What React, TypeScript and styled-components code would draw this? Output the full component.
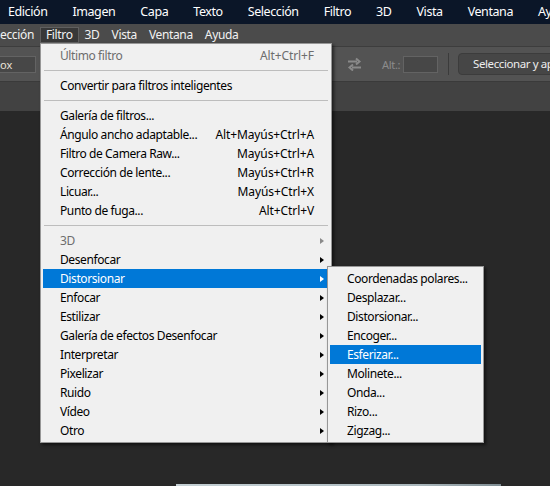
import styled, { createGlobalStyle } from "styled-components";

const GlobalStyle = createGlobalStyle`
	html, body {
		margin: 0;
		padding: 0;
		background: #282828;
	}
	body {
		font-family: "Noto Sans", "Open Sans", sans-serif;
	}
`;

const Page = styled.div`
	position: relative;
	width: 550px;
	height: 486px;
	overflow: hidden;
	display: flex;
	flex-direction: column;
	background: #282828;
`;

// ---- window menu bar (navy) ----
const AppBar = styled.div`
	height: 24px;
	flex: none;
	display: flex;
	align-items: center;
	gap: 25px;
	padding-left: 8px;
	background: #0b1628;
	white-space: nowrap;
`;

const AppBarItem = styled.span`
	flex: none;
	color: #ffffff;
	font-size: 12.5px;
	line-height: 24px;
	letter-spacing: -0.42px;
`;

// ---- photoshop menu bar ----
const MenuBar = styled.div`
	height: 22px;
	flex: none;
	display: flex;
	align-items: center;
	background: #4b4b4b;
	border-bottom: 1px solid #3d3d3d;
	white-space: nowrap;
`;

const MenuBarItem = styled.span<{ $open?: boolean }>`
	flex: none;
	height: 16px;
	box-sizing: border-box;
	padding: 0 5px;
	color: #f2f2f2;
	font-size: 12px;
	line-height: 14px;
	letter-spacing: -0.35px;
	border: 1px solid ${(p) => (p.$open ? "#5f5f5f" : "transparent")};
	background: ${(p) => (p.$open ? "#383838" : "transparent")};
	&:first-child {
		padding-left: 0;
		border-left: none;
	}
`;

// ---- options bar ----
const OptionsBar = styled.div`
	height: 34px;
	flex: none;
	display: flex;
	align-items: center;
	background: #535353;
	white-space: nowrap;
`;

const Field = styled.div<{ $w: number }>`
	flex: none;
	width: ${(p) => p.$w}px;
	height: 17px;
	box-sizing: border-box;
	background: #474747;
	border: 1px solid #636363;
	color: #e9e2d6;
	font-size: 11px;
	line-height: 15px;
	padding-left: 4px;
`;

const PresetField = styled(Field)`
	border-left: none;
	padding-left: 0;
`;

const SwapIcon = styled.svg`
	margin-left: 311px;
	flex: none;
`;

const FieldLabel = styled.span`
	flex: none;
	width: 21px;
	margin-left: 20px;
	color: #8c8c8c;
	font-size: 11px;
	letter-spacing: -0.3px;
`;

const Divider = styled.div`
	flex: none;
	width: 1px;
	height: 22px;
	margin: 0 9px 0 10px;
	background: #3b3b3b;
`;

const MaskButton = styled.div`
	flex: none;
	height: 22px;
	box-sizing: border-box;
	padding: 0 14px;
	border: 1px solid #3c3c3c;
	border-radius: 4px;
	background: #464646;
	color: #ededed;
	font-size: 11.5px;
	line-height: 20px;
	letter-spacing: -0.4px;
`;

const TabStrip = styled.div`
	height: 29px;
	flex: none;
	background: #424242;
	border-top: 1px solid #3a3a3a;
`;

const Canvas = styled.div`
	flex: 1;
	padding: 373px 0 0 176px;
	background: #282828;
`;

const DocImage = styled.div`
	width: 325px;
	height: 20px;
	background: linear-gradient(90deg, #c5d0d4 0%, #b8c5ca 40%, #aab7bc 75%, #7f8d93 100%);
`;

// ---- dropdown menus ----
const Menu = styled.div<{ $left: number; $top: number; $width: number }>`
	position: absolute;
	left: ${(p) => p.$left}px;
	top: ${(p) => p.$top}px;
	width: ${(p) => p.$width}px;
	box-sizing: border-box;
	padding: 2px;
	background: #f0f0f0;
	border: 1px solid #979797;
	box-shadow: 2px 2px 3px rgba(0, 0, 0, 0.55);
	font-size: 12px;
	letter-spacing: -0.4px;
	white-space: nowrap;
`;

const Row = styled.div<{ $active?: boolean; $disabled?: boolean }>`
	height: 19px;
	box-sizing: border-box;
	display: flex;
	padding: 1px 0 0 17px;
	background: ${(p) => (p.$active ? "#0078d7" : "transparent")};
	color: ${(p) => (p.$active ? "#ffffff" : p.$disabled ? "#6d6d6d" : "#000000")};
`;

const Label = styled.span`
	flex: 1;
	line-height: 18px;
`;

const Shortcut = styled.span`
	line-height: 18px;
	letter-spacing: -0.1px;
`;

const ArrowSlot = styled.span`
	width: 15px;
	flex: none;
	display: flex;
	align-items: center;
	padding: 0 0 1px 6px;
	box-sizing: border-box;
`;

const Arrow = styled.span<{ $color: string }>`
	width: 0;
	height: 0;
	border-top: 3.5px solid transparent;
	border-bottom: 3.5px solid transparent;
	border-left: 4px solid ${(p) => p.$color};
`;

const Separator = styled.div`
	height: 1px;
	margin: 5px 1px;
	background: #bdbdbd;
`;

type Item =
	| { sep: true }
	| {
			sep?: false;
			label: string;
			shortcut?: string;
			sub?: boolean;
			disabled?: boolean;
			active?: boolean;
	  };

const filterItems: Item[] = [
	{ label: "Último filtro", shortcut: "Alt+Ctrl+F", disabled: true },
	{ sep: true },
	{ label: "Convertir para filtros inteligentes" },
	{ sep: true },
	{ label: "Galería de filtros..." },
	{ label: "Ángulo ancho adaptable...", shortcut: "Alt+Mayús+Ctrl+A" },
	{ label: "Filtro de Camera Raw...", shortcut: "Mayús+Ctrl+A" },
	{ label: "Corrección de lente...", shortcut: "Mayús+Ctrl+R" },
	{ label: "Licuar...", shortcut: "Mayús+Ctrl+X" },
	{ label: "Punto de fuga...", shortcut: "Alt+Ctrl+V" },
	{ sep: true },
	{ label: "3D", sub: true, disabled: true },
	{ label: "Desenfocar", sub: true },
	{ label: "Distorsionar", sub: true, active: true },
	{ label: "Enfocar", sub: true },
	{ label: "Estilizar", sub: true },
	{ label: "Galería de efectos Desenfocar", sub: true },
	{ label: "Interpretar", sub: true },
	{ label: "Pixelizar", sub: true },
	{ label: "Ruido", sub: true },
	{ label: "Vídeo", sub: true },
	{ label: "Otro", sub: true },
];

const distortItems: Item[] = [
	{ label: "Coordenadas polares..." },
	{ label: "Desplazar..." },
	{ label: "Distorsionar..." },
	{ label: "Encoger..." },
	{ label: "Esferizar...", active: true },
	{ label: "Molinete..." },
	{ label: "Onda..." },
	{ label: "Rizo..." },
	{ label: "Zigzag..." },
];

function MenuList({ items, arrows }: { items: Item[]; arrows: boolean }) {
	return (
		<>
			{items.map((it, i) => {
				if (it.sep) return <Separator key={i} />;
				const arrowColor = it.active ? "#ffffff" : it.disabled ? "#8a8a8a" : "#000000";
				return (
					<Row key={i} $active={it.active} $disabled={it.disabled}>
						<Label>{it.label}</Label>
						{it.shortcut && <Shortcut>{it.shortcut}</Shortcut>}
						{arrows && <ArrowSlot>{it.sub && <Arrow $color={arrowColor} />}</ArrowSlot>}
					</Row>
				);
			})}
		</>
	);
}

export default function App() {
	return (
		<>
			<GlobalStyle />
			<Page>
				<AppBar>
					{["Edición", "Imagen", "Capa", "Texto", "Selección", "Filtro", "3D", "Vista", "Ventana", "Ayuda"].map(
						(t) => (
							<AppBarItem key={t}>{t}</AppBarItem>
						)
					)}
				</AppBar>
				<MenuBar>
					<MenuBarItem>ección</MenuBarItem>
					<MenuBarItem $open>Filtro</MenuBarItem>
					<MenuBarItem>3D</MenuBarItem>
					<MenuBarItem>Vista</MenuBarItem>
					<MenuBarItem>Ventana</MenuBarItem>
					<MenuBarItem>Ayuda</MenuBarItem>
				</MenuBar>
				<OptionsBar>
					<PresetField $w={36}>ox</PresetField>
					<SwapIcon width="15" height="14" viewBox="0 0 15 14">
						<path d="M1 4.5h9M9 1.5l3.5 3-3.5 3" fill="none" stroke="#8a8a8a" strokeWidth="2" />
						<path d="M14 10.5H5M6 7.5l-3.5 3 3.5 3" fill="none" stroke="#8a8a8a" strokeWidth="2" />
					</SwapIcon>
					<FieldLabel>Alt.:</FieldLabel>
					<Field $w={35} />
					<Divider />
					<MaskButton>Seleccionar y aplicar máscara...</MaskButton>
				</OptionsBar>
				<TabStrip />
				<Canvas>
					<DocImage />
				</Canvas>
				<Menu $left={40} $top={43} $width={292}>
					<MenuList items={filterItems} arrows />
				</Menu>
				<Menu $left={327} $top={266} $width={157}>
					<MenuList items={distortItems} arrows={false} />
				</Menu>
			</Page>
		</>
	);
}
